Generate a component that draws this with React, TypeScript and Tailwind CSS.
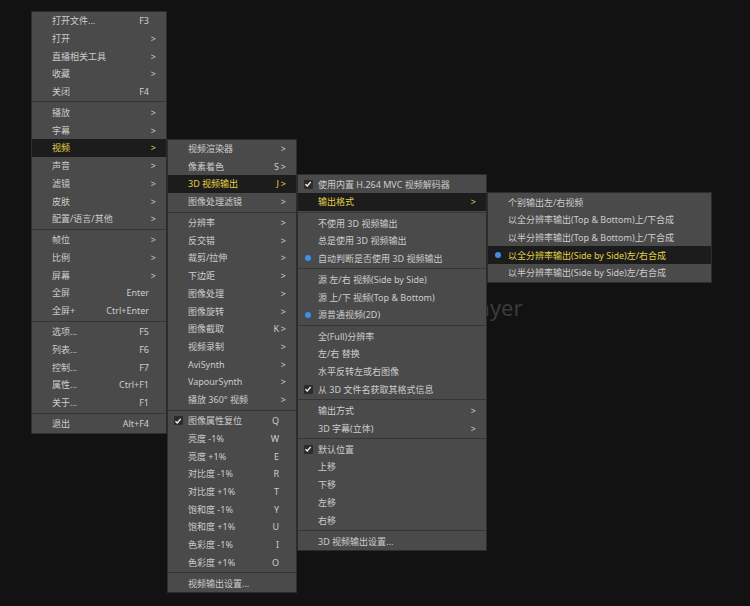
type Row =
  | "sep"
  | {
      label: string;
      sc?: string;
      arrow?: boolean;
      mark?: "check" | "radio";
      active?: boolean;
    };

const mainMenu: Row[] = [
  { label: "打开文件...", sc: "F3" },
  { label: "打开", arrow: true },
  { label: "直播相关工具", arrow: true },
  { label: "收藏", arrow: true },
  { label: "关闭", sc: "F4" },
  "sep",
  { label: "播放", arrow: true },
  { label: "字幕", arrow: true },
  { label: "视频", arrow: true, active: true },
  { label: "声音", arrow: true },
  { label: "滤镜", arrow: true },
  { label: "皮肤", arrow: true },
  { label: "配置/语言/其他", arrow: true },
  "sep",
  { label: "帧位", arrow: true },
  { label: "比例", arrow: true },
  { label: "屏幕", arrow: true },
  { label: "全屏", sc: "Enter" },
  { label: "全屏+", sc: "Ctrl+Enter" },
  "sep",
  { label: "选项...", sc: "F5" },
  { label: "列表...", sc: "F6" },
  { label: "控制...", sc: "F7" },
  { label: "属性...", sc: "Ctrl+F1" },
  { label: "关于...", sc: "F1" },
  "sep",
  { label: "退出", sc: "Alt+F4" },
];

const videoMenu: Row[] = [
  { label: "视频渲染器", arrow: true },
  { label: "像素着色", sc: "S", arrow: true },
  { label: "3D 视频输出", sc: "J", arrow: true, active: true },
  { label: "图像处理滤镜", arrow: true },
  "sep",
  { label: "分辨率", arrow: true },
  { label: "反交错", arrow: true },
  { label: "裁剪/拉伸", arrow: true },
  { label: "下边距", arrow: true },
  { label: "图像处理", arrow: true },
  { label: "图像旋转", arrow: true },
  { label: "图像截取", sc: "K", arrow: true },
  { label: "视频录制", arrow: true },
  { label: "AviSynth", arrow: true },
  { label: "VapourSynth", arrow: true },
  { label: "播放 360° 视频", arrow: true },
  "sep",
  { label: "图像属性复位", sc: "Q", mark: "check" },
  { label: "亮度 -1%", sc: "W" },
  { label: "亮度 +1%", sc: "E" },
  { label: "对比度 -1%", sc: "R" },
  { label: "对比度 +1%", sc: "T" },
  { label: "饱和度 -1%", sc: "Y" },
  { label: "饱和度 +1%", sc: "U" },
  { label: "色彩度 -1%", sc: "I" },
  { label: "色彩度 +1%", sc: "O" },
  "sep",
  { label: "视频输出设置..." },
];

const stereoMenu: Row[] = [
  { label: "使用内置 H.264 MVC 视频解码器", mark: "check" },
  { label: "输出格式", arrow: true, active: true },
  "sep",
  { label: "不使用 3D 视频输出" },
  { label: "总是使用 3D 视频输出" },
  { label: "自动判断是否使用 3D 视频输出", mark: "radio" },
  "sep",
  { label: "源 左/右 视频(Side by Side)" },
  { label: "源 上/下 视频(Top & Bottom)" },
  { label: "源普通视频(2D)", mark: "radio" },
  "sep",
  { label: "全(Full)分辨率" },
  { label: "左/右 替换" },
  { label: "水平反转左或右图像" },
  { label: "从 3D 文件名获取其格式信息", mark: "check" },
  "sep",
  { label: "输出方式", arrow: true },
  { label: "3D 字幕(立体)", arrow: true },
  "sep",
  { label: "默认位置", mark: "check" },
  { label: "上移" },
  { label: "下移" },
  { label: "左移" },
  { label: "右移" },
  "sep",
  { label: "3D 视频输出设置..." },
];

const formatMenu: Row[] = [
  { label: "个别输出左/右视频" },
  { label: "以全分辨率输出(Top & Bottom)上/下合成" },
  { label: "以半分辨率输出(Top & Bottom)上/下合成" },
  { label: "以全分辨率输出(Side by Side)左/右合成", mark: "radio", active: true },
  { label: "以半分辨率输出(Side by Side)左/右合成" },
];

function Check() {
  return (
    <span className="flex size-[9px] items-center justify-center rounded-[1px] bg-[#2b2b2b]">
      <svg viewBox="0 0 10 10" className="size-[8px]">
        <path d="M1.8 5.3 4.1 7.5 8.4 2.4" fill="none" stroke="#f2f2f2" strokeWidth="1.7" />
      </svg>
    </span>
  );
}

function Menu({ rows, className }: { rows: Row[]; className: string }) {
  return (
    <div className={`absolute border border-[#2c2c2c] bg-[#4a4a4a] ${className}`}>
      {rows.map((row, i) =>
        row === "sep" ? (
          <div key={i} className="flex h-[3.5px] items-center">
            <div className="h-px w-full bg-[#363636]" />
          </div>
        ) : (
          <div
            key={i}
            className={`flex h-[17.7px] items-center pr-[10px] ${
              row.active ? "bg-[#1c1c1c] text-[#e2d247]" : "text-[#cdcdcd]"
            }`}
          >
            <span className="flex w-[20px] items-center justify-center">
              {row.mark === "check" && <Check />}
              {row.mark === "radio" && <span className="size-[6px] rounded-full bg-[#3d8fe8]" />}
            </span>
            <span className="flex-1 whitespace-nowrap">{row.label}</span>
            {row.sc && <span className="whitespace-nowrap">{row.sc}</span>}
            <span className="w-[7px] text-right">{row.arrow ? ">" : ""}</span>
          </div>
        )
      )}
    </div>
  );
}

export default function App() {
  return (
    <div className="relative h-[606px] w-[750px] overflow-hidden bg-[#121212] font-['Noto_Sans','Noto_Sans_CJK_SC',sans-serif] text-[9px] leading-none">
      <div className="pl-[424px] pt-[296px] text-[22px] text-[#3b3b3b]">PotPlayer</div>

      <Menu rows={mainMenu} className="left-[31px] top-[10.8px] w-[136px]" />
      <Menu rows={videoMenu} className="left-[167px] top-[138.5px] w-[130px]" />
      <Menu rows={stereoMenu} className="left-[297px] top-[174.3px] w-[190px]" />
      <Menu rows={formatMenu} className="left-[487px] top-[192.2px] w-[225px]" />
    </div>
  );
}
